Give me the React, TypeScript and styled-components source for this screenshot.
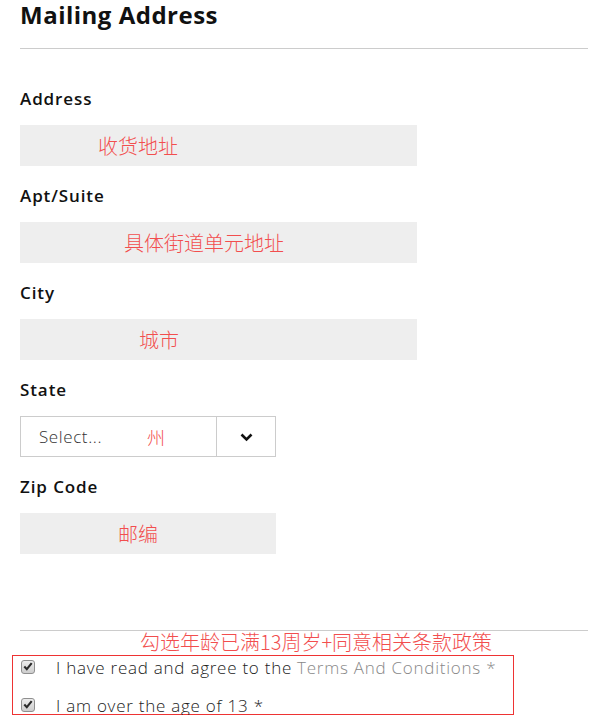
import * as React from 'react'
import styled, { createGlobalStyle } from 'styled-components'

const GlobalStyle = createGlobalStyle`
  html, body {
    margin: 0;
    padding: 0;
    background: #fff;
  }
  body {
    font-family: 'Open Sans', 'Noto Sans CJK SC', sans-serif;
    color: #111;
  }
`

const Page = styled.div`
  padding: 0 1px 0 20px;
  width: 568px;
`

const Title = styled.h1`
  margin: 0;
  font-size: 24px;
  line-height: 29px;
  font-weight: 700;
  color: #111;
  letter-spacing: 0.5px;
`

const Divider = styled.div<{ $top: number }>`
  height: 1px;
  background: #cccccc;
  margin-top: ${({ $top }) => $top}px;
`

const Fields = styled.div`
  display: flex;
  flex-direction: column;
  gap: 20px;
  margin-top: 40px;
`

const Field = styled.div`
  display: flex;
  flex-direction: column;
`

const Label = styled.label`
  font-size: 17px;
  line-height: 20px;
  font-weight: 600;
  letter-spacing: 0.9px;
  color: #111;
  margin-bottom: 16px;
`

const InputBox = styled.div<{ $width: number }>`
  width: ${({ $width }) => $width}px;
  height: 41px;
  background: #eeeeee;
  display: flex;
  align-items: center;
  box-sizing: border-box;
`

const Note = styled.span<{ $indent: number; $size?: number }>`
  margin-left: ${({ $indent }) => $indent}px;
  font-family: 'Noto Sans CJK SC', sans-serif;
  font-weight: 300;
  font-size: ${({ $size }) => $size || 20}px;
  line-height: 24px;
  letter-spacing: 0;
  color: #f24e4e;
`

const SelectBox = styled.div`
  width: 256px;
  height: 41px;
  box-sizing: border-box;
  border: 1px solid #cccccc;
  display: flex;
`

const SelectValue = styled.div`
  width: 196px;
  border-right: 1px solid #cccccc;
  display: flex;
  align-items: center;
  padding-left: 18px;
  box-sizing: border-box;
  font-size: 17px;
  font-weight: 300;
  letter-spacing: 0.6px;
  color: #333;
`

const SelectArrow = styled.div`
  flex: 1;
  display: flex;
  align-items: center;
  justify-content: center;
  padding-top: 1px;
`

const Annotation = styled.div`
  padding-left: 120px;
  height: 25px;
  display: flex;
  align-items: flex-start;
  margin-top: -1px;
`

const ConsentBox = styled.div`
  margin-left: -8px;
  width: 502px;
  height: 60px;
  box-sizing: border-box;
  border: 1px solid #ee3333;
  padding: 2px 0 0 8px;
  display: flex;
  flex-direction: column;
  gap: 19px;
`

const CheckRow = styled.div`
  display: flex;
  align-items: center;
  height: 19px;
  font-size: 17px;
  font-weight: 300;
  letter-spacing: 0.75px;
  color: #222;
  white-space: nowrap;
`

const Check = styled.span`
  width: 14px;
  height: 14px;
  flex-shrink: 0;
  box-sizing: border-box;
  border: 1px solid #8f8f8f;
  border-radius: 3px;
  background: linear-gradient(#ececec, #cdcdcd);
  display: inline-flex;
  align-items: center;
  justify-content: center;
  margin-right: 21px;
  margin-top: -2px;
`

const Muted = styled.span`
  color: #888;
  margin-left: 5px;
`

const ChevronIcon = () => (
  <svg width="13" height="9" viewBox="0 0 13 9">
    <polyline points="1.5,1.5 6.5,6.5 11.5,1.5" fill="none" stroke="#111" strokeWidth="2.6" />
  </svg>
)

const CheckIcon = () => (
  <svg width="10" height="9" viewBox="0 0 10 9">
    <polyline points="1.3,4.6 3.8,7.2 8.7,1.2" fill="none" stroke="#2a2a2a" strokeWidth="2.1" />
  </svg>
)

const fields = [
  { label: 'Address', note: '收货地址', indent: 78, width: 397 },
  { label: 'Apt/Suite', note: '具体街道单元地址', indent: 104, width: 397 },
  { label: 'City', note: '城市', indent: 119, width: 397 },
]

export default function App() {
  return (
    <Page>
      <GlobalStyle />
      <Title>Mailing Address</Title>
      <Divider $top={19} />
      <Fields>
        {fields.map(f => (
          <Field key={f.label}>
            <Label>{f.label}</Label>
            <InputBox $width={f.width}>
              <Note $indent={f.indent}>{f.note}</Note>
            </InputBox>
          </Field>
        ))}
        <Field>
          <Label>State</Label>
          <SelectBox>
            <SelectValue>
              Select...
              <Note $indent={45} $size={18}>州</Note>
            </SelectValue>
            <SelectArrow>
              <ChevronIcon />
            </SelectArrow>
          </SelectBox>
        </Field>
        <Field>
          <Label>Zip Code</Label>
          <InputBox $width={256}>
            <Note $indent={98}>邮编</Note>
          </InputBox>
        </Field>
      </Fields>
      <Divider $top={76} />
      <Annotation>
        <Note $indent={0}>勾选年龄已满13周岁+同意相关条款政策</Note>
      </Annotation>
      <ConsentBox>
        <CheckRow>
          <Check>
            <CheckIcon />
          </Check>
          I have read and agree to the<Muted>Terms And Conditions *</Muted>
        </CheckRow>
        <CheckRow>
          <Check>
            <CheckIcon />
          </Check>
          I am over the age of 13 *
        </CheckRow>
      </ConsentBox>
    </Page>
  )
}
